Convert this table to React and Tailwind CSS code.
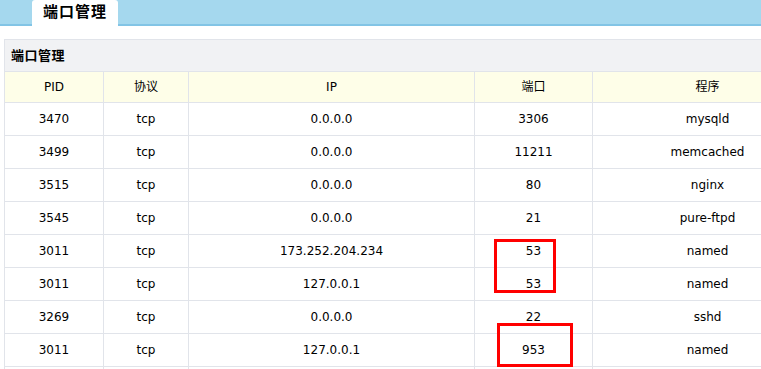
const rows = [
  ["3470", "tcp", "0.0.0.0", "3306", "mysqld"],
  ["3499", "tcp", "0.0.0.0", "11211", "memcached"],
  ["3515", "tcp", "0.0.0.0", "80", "nginx"],
  ["3545", "tcp", "0.0.0.0", "21", "pure-ftpd"],
  ["3011", "tcp", "173.252.204.234", "53", "named"],
  ["3011", "tcp", "127.0.0.1", "53", "named"],
  ["3269", "tcp", "0.0.0.0", "22", "sshd"],
  ["3011", "tcp", "127.0.0.1", "953", "named"],
  ["", "", "", "", ""],
];

const headers = ["PID", "协议", "IP", "端口", "程序"];
const cols = "grid grid-cols-[99px_85px_286px_118px_230px]";

export default function App() {
  return (
    <div
      className="relative w-[761px] h-[369px] overflow-hidden bg-white text-black"
      style={{ fontFamily: '"DejaVu Sans", "Noto Sans CJK SC", sans-serif' }}
    >
      {/* Top tab bar */}
      <div className="h-[26px] bg-[#a5d8ee] border-b-2 border-[#82c4e5] flex items-end pl-[32px]">
        <div className="h-[26px] w-[86px] -mb-[2px] bg-white rounded-t-[3px] flex items-center justify-center text-[15px] font-bold tracking-[1px] pb-[2px]">
          端口管理
        </div>
      </div>

      {/* Port table */}
      <div className="ml-[4px] mt-[13px] w-[818px] border-l border-t border-[#e1e4ea]">
        <div className="h-[32px] bg-[#f1f2f4] border-b border-r border-[#e1e4ea] flex items-center pl-[6px] text-[13px] font-bold tracking-[0.5px]">
          端口管理
        </div>
        <div className={`${cols} h-[31px] bg-[#fefee8] text-[12px]`}>
          {headers.map((h) => (
            <div
              key={h}
              className="border-r border-b border-[#e1e4ea] flex items-center justify-center"
            >
              {h}
            </div>
          ))}
        </div>
        {rows.map((r, i) => (
          <div key={i} className={`${cols} h-[33px] text-[12px]`}>
            {r.map((c, j) => (
              <div
                key={j}
                className="border-r border-b border-[#e1e4ea] flex items-center justify-center"
              >
                {c}
              </div>
            ))}
          </div>
        ))}
      </div>

      {/* Red highlight annotations */}
      <div className="absolute left-[494px] top-[239px] w-[62px] h-[54px] border-[3px] border-[#ff0000]" />
      <div className="absolute left-[497px] top-[323px] w-[76px] h-[44px] border-[3px] border-[#ff0000]" />
    </div>
  );
}
